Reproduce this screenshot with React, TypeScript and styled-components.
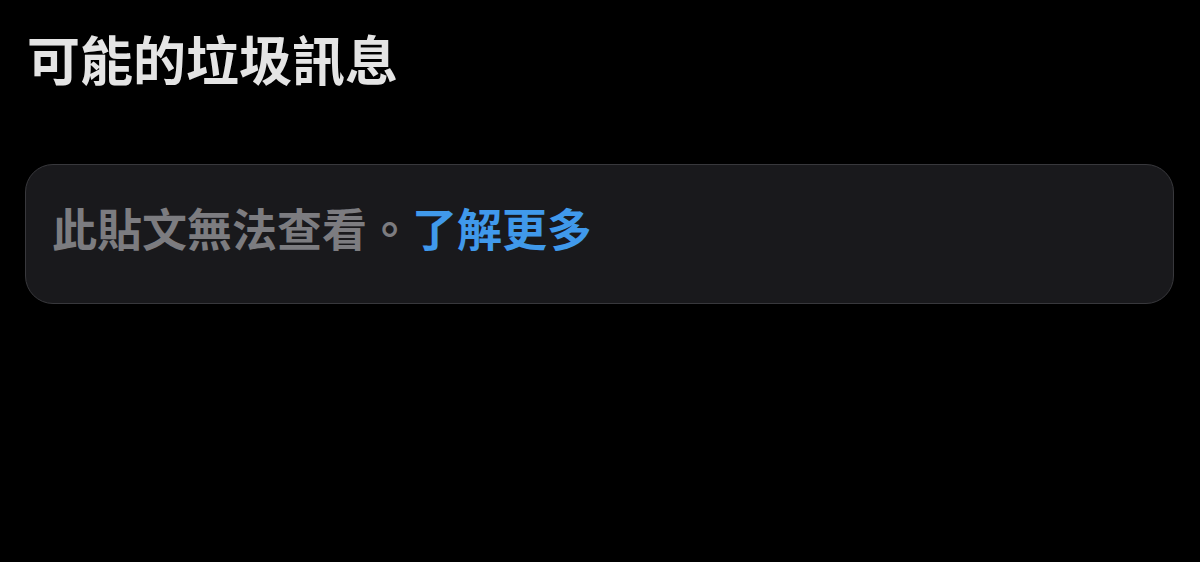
import { createGlobalStyle } from "styled-components";
import styled from "styled-components";

const GlobalStyle = createGlobalStyle`
  html, body {
    margin: 0;
    padding: 0;
    background: #000;
  }
  body {
    font-family: "Noto Sans CJK TC", "Noto Sans", sans-serif;
  }
`;

const Page = styled.div`
  width: 1200px;
  height: 562px;
  box-sizing: border-box;
  padding: 25px 26px 0 25px;
  display: flex;
  flex-direction: column;
  background: #000;
`;

const Title = styled.h1`
  margin: 0 0 0 2px;
  font-size: 53px;
  line-height: 66px;
  font-weight: 700;
  color: #e4e4e4;
`;

const Notice = styled.div`
  margin-top: 73px;
  height: 140px;
  box-sizing: border-box;
  border: 1px solid #38383c;
  border-radius: 28px;
  background: #19191c;
  display: flex;
  align-items: center;
  padding: 0 26px 14px;
`;

const NoticeText = styled.p`
  margin: 0;
  font-size: 45px;
  font-weight: 700;
  color: #7c7c80;
`;

const Link = styled.span`
  color: #4099eb;
`;

export default function App() {
  return (
    <>
      <GlobalStyle />
      <Page>
        <Title>可能的垃圾訊息</Title>
        <Notice>
          <NoticeText>
            此貼文無法查看。<Link>了解更多</Link>
          </NoticeText>
        </Notice>
      </Page>
    </>
  );
}
